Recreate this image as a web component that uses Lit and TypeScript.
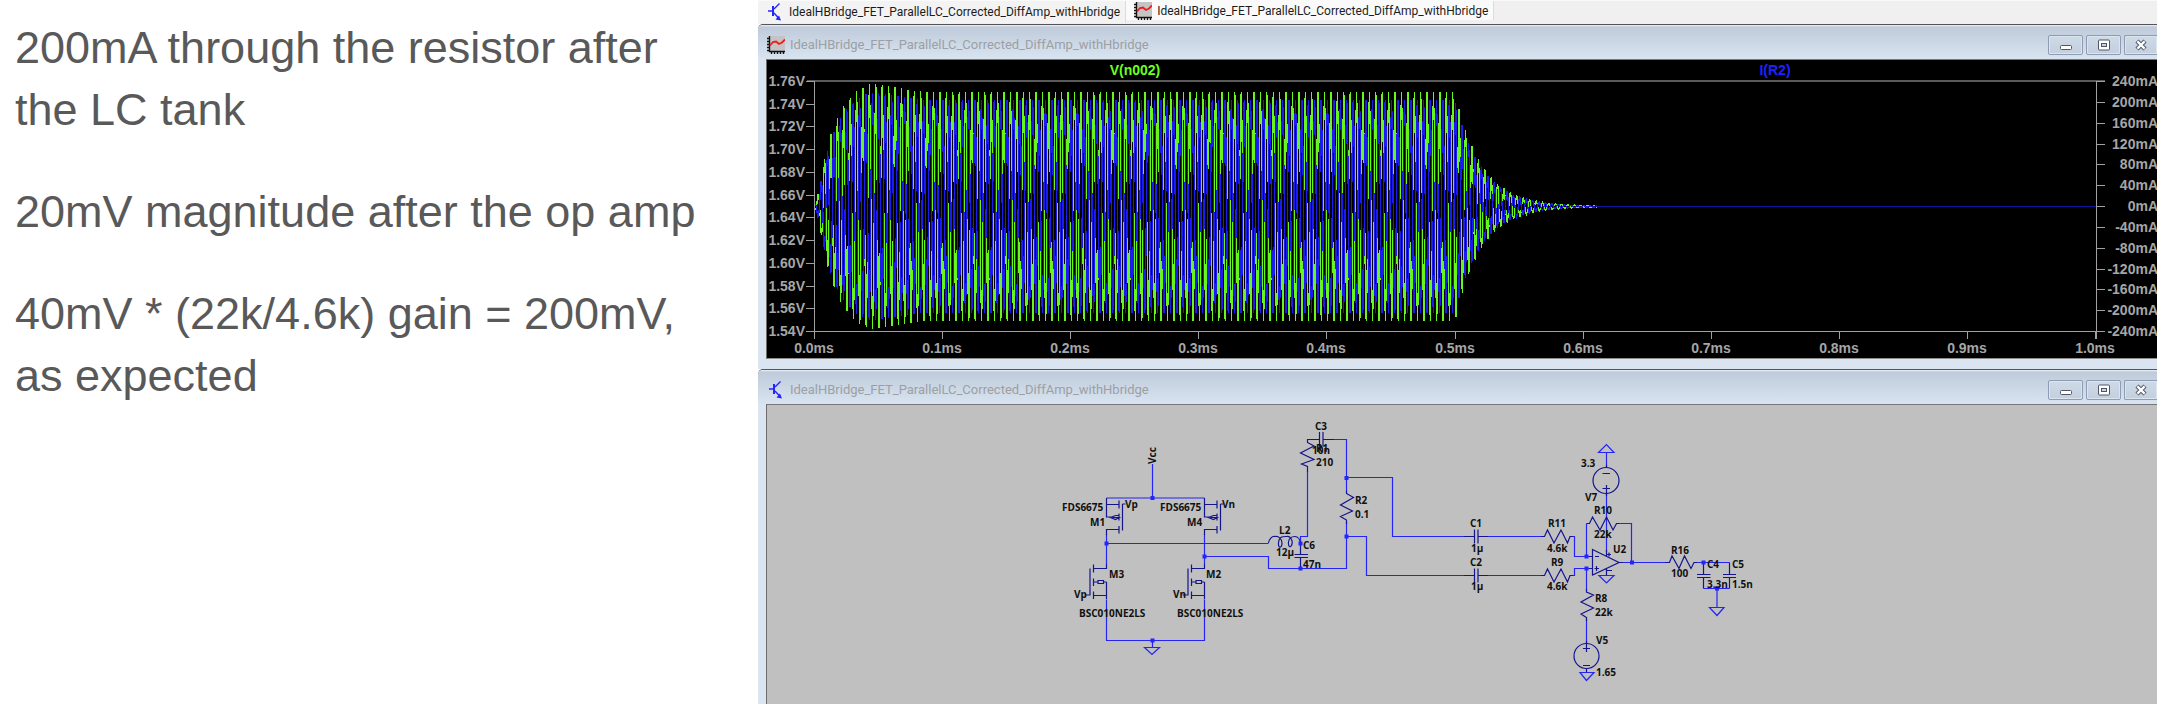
import { LitElement, html, svg, css } from "lit";
import { customElement, property } from "lit/decorators.js";

const FILE = "IdealHBridge_FET_ParallelLC_Corrected_DiffAmp_withHbridge";

const plotIcon = html`<svg class="icon" viewBox="0 0 18 18" aria-hidden="true">
  <rect x="2" y="0" width="16" height="15" fill="#c4c4c4" />
  <path d="M2.5 0V15.5H18M0 2.5H2M0 5.5H2M0 8.5H2M0 11.5H2M0 14.5H2M4.5 16V18M7.5 16V18M10.5 16V18M13.5 16V18M16.5 16V18" fill="none" stroke="#111" stroke-width="1.4" />
  <path d="M3 9.5L6 6L9 5.5L12 8L15 6.5L18 3.5" fill="none" stroke="#ee1c1c" stroke-width="1.8" />
</svg>`;

const schematicIcon = html`<svg class="icon" viewBox="0 0 18 18" aria-hidden="true">
  <path d="M2 8H6M8 6L13.5 0.5M8 10L13 15.5" fill="none" stroke="#2424ff" stroke-width="1.4" />
  <path d="M7 3V13" stroke="#2424ff" stroke-width="2" />
  <path d="M15 17.5L9.5 16.5L13 12.5Z" fill="#2424ff" />
</svg>`;

@customElement("app-window")
class AppWindow extends LitElement {
  @property() kind = "plot";

  static styles = css`
    :host { display: block; }
    .frame {
      border-top: 1px solid #555459;
      border-radius: 5px 0 0 0;
      background: #dbe5f2;
      overflow: hidden;
    }
    .bar {
      display: flex;
      align-items: center;
      height: 34px;
      box-sizing: border-box;
      padding-top: 6px;
      padding-left: 9px;
      gap: 5px;
      background: linear-gradient(#eef3f8 0, #bfcbda 2px, #d9e4f1 100%);
    }
    .title {
      flex: 1;
      min-width: 0;
      overflow: hidden;
      white-space: nowrap;
      margin: 0;
      font: 13px/20px Roboto, sans-serif;
      color: #9c9fa4;
    }
    .icon { width: 18px; height: 18px; flex: none; }
    .controls { display: flex; gap: 3px; }
    .control {
      width: 35px;
      height: 20px;
      padding: 0;
      box-sizing: border-box;
      border: 1px solid #8e9bb4;
      border-radius: 2px;
      background: linear-gradient(#cfdae7, #c3cfde);
      box-shadow: inset 0 0 0 1px #dbe5f0;
      display: flex;
      align-items: center;
      justify-content: center;
    }
    .control:last-child {
      width: 33px;
      border-right: 0;
      border-radius: 2px 0 0 2px;
    }
    .glyph { width: 14px; height: 12px; }
    .client {
      margin-left: 8px;
      border-left: 1px solid #6d6d6d;
      border-top: 1px solid #77777b;
    }
    .plot { border-bottom: 1px solid #8c8c8c; margin-bottom: 10px; }
  `;

  render() {
    return html`<section class="frame">
      <header class="bar">
        ${this.kind === "plot" ? plotIcon : schematicIcon}
        <h2 class="title">${FILE}</h2>
        <div class="controls">
          <button class="control" aria-label="Minimize">
            <svg class="glyph" viewBox="0 0 14 12"><rect x="1.5" y="6.5" width="11" height="4" rx="1" fill="#fff" stroke="#4e5566" /></svg>
          </button>
          <button class="control" aria-label="Maximize">
            <svg class="glyph" viewBox="0 0 14 12"><rect x="1.5" y="1" width="11" height="10" rx="1" fill="#fff" stroke="#4e5566" /><rect x="4.5" y="4.5" width="5" height="3" fill="#c9d4e3" stroke="#4e5566" /></svg>
          </button>
          <button class="control" aria-label="Close">
            <svg class="glyph" viewBox="0 0 14 12"><path d="M3 2L11 10M11 2L3 10" stroke="#4e5566" stroke-width="4.4" /><path d="M3.4 2.4L10.6 9.6M10.6 2.4L3.4 9.6" stroke="#fff" stroke-width="2.2" /></svg>
          </button>
        </div>
      </header>
      <div class="client ${this.kind}"><slot></slot></div>
    </section>`;
  }
}

/* Trace geometry, in the plot's own units. */
const LEFT = 48, RIGHT = 1329, TOP = 21, BOTTOM = 271, MID = 146.5;
const PERIOD = 6.41, OFF = 688;

const RISE = [[0, 3], [4, 14], [9, 45], [15, 70], [22, 88], [28, 100], [41, 115], [54, 122], [62, 122], [80, 119], [105, 115], [135, 114], [640, 114]];

function envelope(x: number): number {
  if (x > OFF) return 114 * Math.exp(-(x - OFF) / 26.5);
  const t = x - LEFT;
  for (let i = 1; i < RISE.length; i++) {
    const [x0, a0] = RISE[i - 1];
    const [x1, a1] = RISE[i];
    if (t <= x1) return a0 + ((a1 - a0) * (t - x0)) / (x1 - x0);
  }
  return 114;
}

/* Eight samples per cycle, aligned so that each crest and trough is hit. */
function trace(phase: number, gain: number, end: number): string {
  const points: string[] = [];
  const first = Math.ceil(((LEFT - phase) / PERIOD) * 8);
  for (let k = first; phase + (k * PERIOD) / 8 <= end; k++) {
    const x = phase + (k * PERIOD) / 8;
    const y = MID - gain * envelope(x) * Math.cos((Math.PI * k) / 4);
    points.push(`${x.toFixed(1)},${y.toFixed(1)}`);
  }
  return points.join(" ");
}

@customElement("wave-plot")
class WavePlot extends LitElement {
  static styles = css`
    :host { display: block; background: #000; }
    .plot { display: block; width: 100%; height: auto; }
    .label { font: bold 14px "Liberation Sans", Arial, sans-serif; fill: #a6a6a6; }
    .end { text-anchor: end; }
    .mid { text-anchor: middle; }
    .volt { fill: #6cff1e; }
    .amp { fill: #2121ff; }
    .axis { stroke: #a0a0a0; fill: none; }
    .edge { stroke: #5a5a5a; stroke-width: 2; fill: none; }
    .green { stroke: #66f51c; fill: none; stroke-width: 1.3; shape-rendering: crispEdges; }
    .blue { stroke: #1c1cf0; fill: none; stroke-width: 1.3; shape-rendering: crispEdges; }
    .flat { stroke: #12129c; fill: none; }
  `;

  render() {
    const rows = (BOTTOM - TOP) / 11;
    const steps = (BOTTOM - TOP) / 12;
    const column = (RIGHT - LEFT) / 10;
    return html`<svg class="plot" viewBox="0 0 1390 298" role="img" aria-label="V(n002) and I(R2) against time">
      <polyline class="green" points=${trace(920.7 - 767, 1, 830)} />
      <polyline class="blue" points=${trace(923.7 - 767, 0.93, 830)} />
      <path class="flat" d="M826 146.5H1329" />
      <path class="edge" d="M40 21H1338" />
      <path class="axis" d="M47.5 21V279M1329.5 21V279M40 271.5H1338" />
      <text class="label volt mid" x="368" y="15">V(n002)</text>
      <text class="label amp mid" x="1008" y="15">I(R2)</text>
      ${Array.from({ length: 12 }, (_, i) => {
        const y = Math.round(TOP + i * rows);
        return svg`<path class="axis" d="M39 ${y + 0.5}H47" /><text class="label end" x="38" y=${y + 5}>${(1.76 - i * 0.02).toFixed(2)}V</text>`;
      })}
      ${Array.from({ length: 13 }, (_, i) => {
        const y = Math.round(TOP + i * steps);
        return svg`<path class="axis" d="M1329 ${y + 0.5}H1338" /><text class="label end" x="1391" y=${y + 5}>${240 - i * 40}mA</text>`;
      })}
      ${Array.from({ length: 11 }, (_, i) => {
        const x = Math.round(LEFT + i * column);
        return svg`<path class="axis" d="M${x - 0.5} 271V279" /><text class="label mid" x=${x - 1} y="293">${(i / 10).toFixed(1)}ms</text>`;
      })}
    </svg>`;
  }
}

const LABELS: [number, number, string][] = [
  [1062, 511, "FDS6675"], [1160, 511, "FDS6675"], [1090, 526, "M1"], [1187, 526, "M4"],
  [1125, 508, "Vp"], [1222, 508, "Vn"], [1109, 578, "M3"], [1206, 578, "M2"],
  [1074, 598, "Vp"], [1173, 598, "Vn"], [1079, 617, "BSC010NE2LS"], [1177, 617, "BSC010NE2LS"],
  [1279, 534, "L2"], [1276, 556, "12µ"], [1303, 549, "C6"], [1303, 568, "47n"],
  [1315, 430, "C3"], [1316, 452, "R1"], [1312, 454, "10n"], [1316, 466, "210"],
  [1355, 504, "R2"], [1355, 518, "0.1"], [1470, 527, "C1"], [1471, 552, "1µ"],
  [1470, 566, "C2"], [1471, 590, "1µ"], [1548, 527, "R11"], [1547, 552, "4.6k"],
  [1551, 566, "R9"], [1547, 590, "4.6k"], [1581, 467, "3.3"], [1585, 501, "V7"],
  [1594, 514, "R10"], [1594, 538, "22k"], [1613, 553, "U2"], [1595, 602, "R8"],
  [1595, 616, "22k"], [1596, 644, "V5"], [1596, 676, "1.65"], [1671, 554, "R16"],
  [1671, 577, "100"], [1707, 568, "C4"], [1732, 568, "C5"], [1707, 588, "3.3n"], [1732, 588, "1.5n"],
];

const NODES = [
  [1152.5, 498], [1106.5, 543.5], [1204.5, 556.5], [1152.5, 640.5], [1300.5, 543.5], [1300.5, 568.5],
  [1346.5, 478], [1346.5, 536.5], [1586.5, 556.5], [1586.5, 568.5], [1632, 562.5], [1703.5, 562.5], [1717, 588.5],
];

const WIRES = `
  M1152.5 464V498M1106.5 498H1204.5M1106.5 534V565M1204.5 534V565M1106.5 543.5H1268.5
  M1204.5 556.5H1268.5V568.5H1346.5V522M1106.5 600V640.5H1204.5V600M1152.5 640.5V647
  M1144.5 647.5H1159.5L1152 654.5ZM1307.5 472V536.5H1300.5V543.5
  M1334 439.5H1346.5V492M1346.5 477.5H1392.5V536.5H1465M1346.5 536.5H1366.5V575.5H1465
  M1487 536.5H1542M1487 575.5H1542M1570 536.5H1574.5V556.5H1590M1570 575.5H1574.5V568.5H1590
  M1586.5 556.5V523.5M1618 523.5H1631.5V562.5M1622 562.5H1666M1586.5 568.5V590M1586.5 619V643
  M1606.5 453V467M1598.5 452.5H1614L1606.5 444.5ZM1606.5 494V552
  M1599 575.5H1614L1606.5 583ZM1580 672.5H1594L1586.5 680.5Z
  M1696 562.5H1729.5M1703.5 588.5H1729.5M1717 588.5V607M1709.5 607.5H1724L1717 615.5Z`;

const PMOS = `M0 0V19H6M0 6.5H12.5M12.5 2.5V10.5M12.5 15.5V22.5M12.5 28V35.5M12.5 31.5H0V37
  M6 19.5H12.5L9 21.5L4 19.5L9 17.5H12M16 6V32.5M16 6H19`;
const NMOS = `M0 -4V0H-13M-13 -4V4M-13 10V17.5M-13 23V30.5M-16.5 0V27M-22 26.5H-16.5
  M-13 13.5H-9M0 13.5H-3M-8.5 12H-3V15H-8.5ZM0 13.5V31M-13 27H0`;

const PARTS = `
  M1268.5 543C1269 539 1272 536 1275 536.5C1279 536 1282 539 1282 543C1282 548 1278 549 1278.5 543C1279 536 1283 536.5 1287 536.5C1290 536 1293 540 1292 544C1291 548 1288 548 1288.5 542C1289 537 1292 536.5 1295 536.5C1298 536.5 1300 540 1300.5 543
  M1300.5 543V554M1294.5 554.5H1308M1294.5 557.5H1308M1300.5 557V568
  M1307.5 472V466.5L1301.5 464L1314 459.5L1300.5 453L1314 446L1307.5 442.5V439.5H1319.5M1319.5 432V446.5M1323 432V446.5M1323 439.5H1334
  M1346.5 491V493.5L1353.5 497.5L1340.5 505L1352.5 511L1340.5 516.5L1346.5 520V524
  M1464 536.5H1474.5M1474.5 529.5V543.5M1478 529.5V543.5M1478 536.5H1488
  M1464 575.5H1474.5M1474.5 568.5V582.5M1478 568.5V582.5M1478 575.5H1488
  M1541 536.5H1544.5L1547.5 530L1554 543L1561 530L1567.5 543L1570 536.5H1573
  M1541 575.5H1544.5L1547.5 569L1554 582L1561 569L1567.5 582L1570 575.5H1573
  M1586.5 523.5H1589.5L1592.5 517L1600 530L1606.5 517L1613 530L1616.5 523.5H1619
  M1665 562.5H1669.5L1672 556L1679 568.5L1684.5 556L1691 568.5L1694 562.5H1697
  M1592.5 549.5L1619 562.5L1592.5 575ZM1589 556.5H1593M1595 556.5H1599M1589 568.5H1593M1594.5 568.5H1599M1596.5 566V571M1619 562.5H1623
  M1606.5 550V556M1607 554.5H1611M1609 552.5V556.5M1606.5 569V575.5M1607 570.5H1612
  M1586.5 589V592L1593.5 595L1581 602L1593.5 608L1581 614L1586.5 617.5V621
  M1602.5 473.5H1610M1602.5 488.5H1610M1606.5 485V496M1606.5 465V468
  M1583 648.5H1590M1586.5 641V652M1583 665.5H1590M1586.5 669V672
  M1703.5 562.5V574M1697 574.5H1710.5M1697 577.5H1710.5M1703.5 577V588.5
  M1729.5 562.5V574M1723 574.5H1736M1723 577.5H1736M1729.5 577V588.5`;

@customElement("circuit-schematic")
class CircuitSchematic extends LitElement {
  static styles = css`
    :host { display: block; background: #c0c0c0; }
    .sheet { display: block; width: 100%; height: auto; }
    .label { font: 700 10px "Open Sans", sans-serif; fill: #101010; }
    .wire { stroke: #2424f8; fill: none; stroke-width: 1.2; }
    .part { stroke: #14148c; fill: none; stroke-width: 1.2; }
    .node { fill: #2424ff; }
  `;

  render() {
    return html`<svg class="sheet" viewBox="767 405 1390 299" role="img" aria-label="H-bridge, LC tank and differential amplifier schematic">
      <path class="wire" d=${WIRES} />
      <path class="part" d=${PARTS} />
      <path class="part" transform="translate(1106.5 498)" d=${PMOS} />
      <path class="part" transform="translate(1204.5 498)" d=${PMOS} />
      <path class="part" transform="translate(1106.5 568.5)" d=${NMOS} />
      <path class="part" transform="translate(1204.5 568.5)" d=${NMOS} />
      <circle class="part" cx="1606" cy="480.5" r="13" />
      <circle class="part" cx="1586.5" cy="656" r="12.5" />
      ${NODES.map(([x, y]) => svg`<rect class="node" x=${x - 2} y=${y - 2} width="4" height="4" />`)}
      ${LABELS.map(([x, y, t]) => svg`<text class="label" x=${x} y=${y}>${t}</text>`)}
      <text class="label" transform="translate(1156 464) rotate(-90)">Vcc</text>
    </svg>`;
  }
}

@customElement("app-root")
class AppRoot extends LitElement {
  static styles = css`
    :host { display: block; background: #fff; }
    .slide { display: grid; grid-template-columns: 757fr 1400fr; }
    .notes {
      padding: 17px 40px 0 15px;
      font: 45px/62px "Liberation Sans", Arial, sans-serif;
      color: #595959;
    }
    .note { margin: 0 0 40px; }
    .app { min-width: 0; margin-left: 1px; }
    .tabs {
      display: flex;
      height: 24px;
      box-sizing: border-box;
      border-top: 1px solid #fafafa;
      background: #f0f0f0;
    }
    .tab {
      display: flex;
      align-items: center;
      gap: 5px;
      height: 22px;
      padding: 0 5px 0 8px;
      border: 0;
      border-right: 1px solid #dcdcdc;
      background: #f3f3f3;
      color: #1c1c1c;
      white-space: nowrap;
      font: 12px/16px Roboto, sans-serif;
    }
    .active { background: #fafafa; height: 19px; }
    .icon { width: 18px; height: 18px; flex: none; }
  `;

  render() {
    return html`<main class="slide">
      <section class="notes">
        <p class="note">200mA through the resistor after the LC tank</p>
        <p class="note">20mV magnitude after the op amp</p>
        <p class="note">40mV * (22k/4.6k) gain = 200mV, as expected</p>
      </section>
      <section class="app">
        <nav class="tabs">
          <button class="tab">${schematicIcon}${FILE}</button>
          <button class="tab active">${plotIcon}${FILE}</button>
        </nav>
        <app-window kind="plot"><wave-plot></wave-plot></app-window>
        <app-window kind="schematic"><circuit-schematic></circuit-schematic></app-window>
      </section>
    </main>`;
  }
}
